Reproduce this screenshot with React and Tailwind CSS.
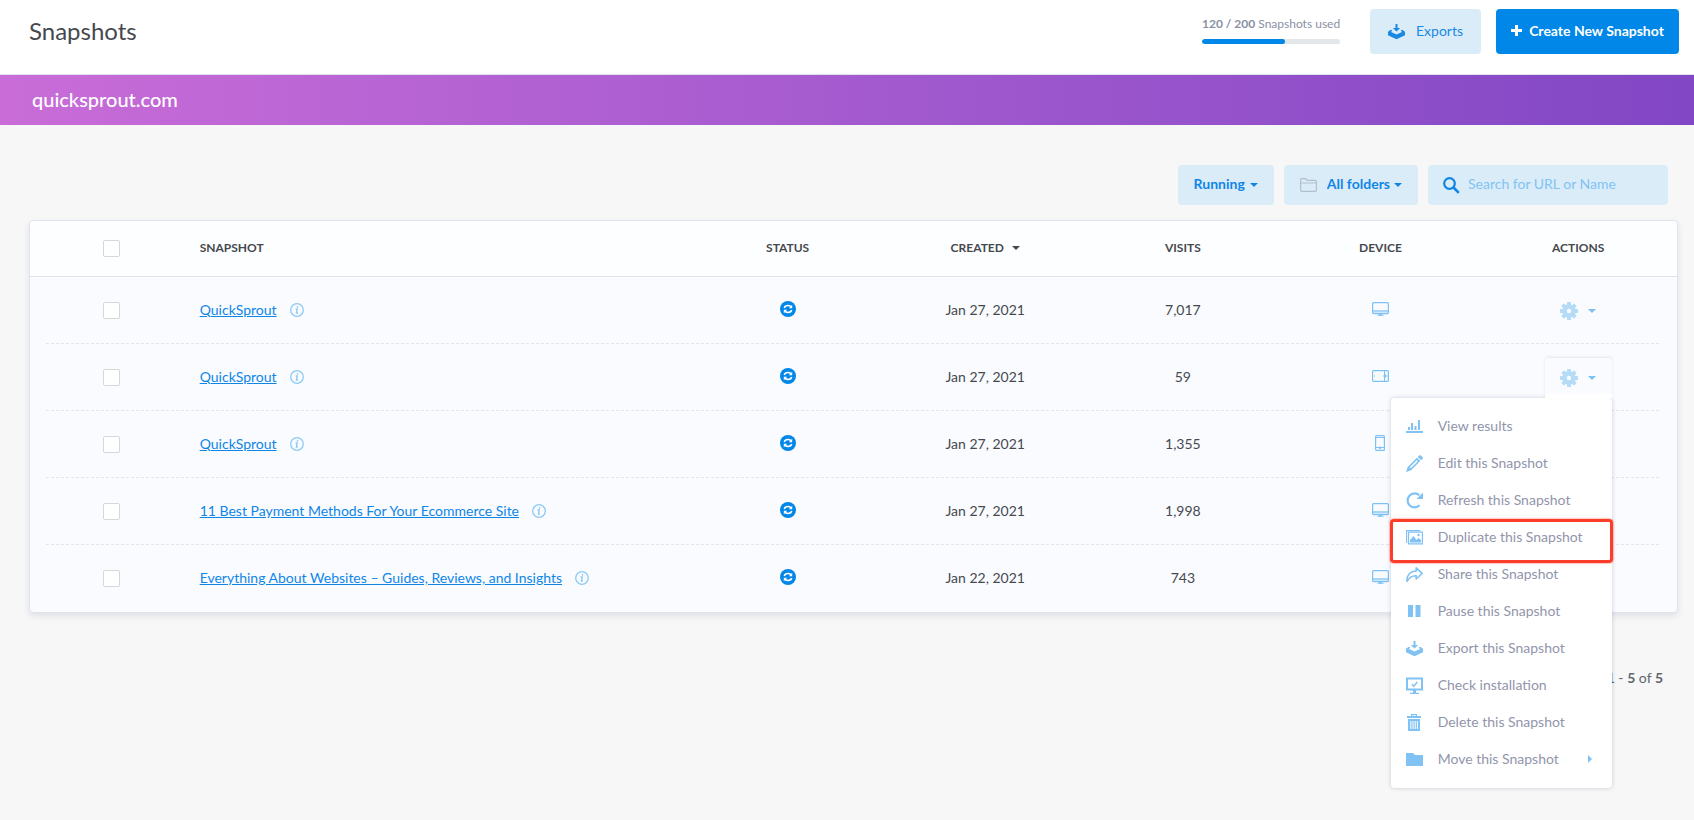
import React, { useState } from 'react';

const snapshots = [
  { id: 1, name: 'QuickSprout', created: 'Jan 27, 2021', visits: '7,017', device: 'desktop' },
  { id: 2, name: 'QuickSprout', created: 'Jan 27, 2021', visits: '59', device: 'tablet' },
  { id: 3, name: 'QuickSprout', created: 'Jan 27, 2021', visits: '1,355', device: 'mobile' },
  { id: 4, name: '11 Best Payment Methods For Your Ecommerce Site', created: 'Jan 27, 2021', visits: '1,998', device: 'desktop' },
  { id: 5, name: 'Everything About Websites – Guides, Reviews, and Insights', created: 'Jan 22, 2021', visits: '743', device: 'desktop' },
];

const Caret = ({ className }) => (
  <svg className={className} width="8" height="4" viewBox="0 0 8 4" fill="currentColor" aria-hidden="true">
    <path d="M0 0h8L4 4z" />
  </svg>
);

const ExportIcon = () => (
  <svg width="17" height="16" viewBox="0 0 17 16" fill="currentColor" aria-hidden="true">
    <path d="M7.5 0h2v4h2.700L8.500 7.500 4.800 4h2.700z" />
    <path d="M4.300 6.400 3 8l5.500 2.600L14 8l-1.300-1.600 1.500-.6L17 7.800v3.400l-8.500 4L0 11.200V7.800l2.800-2z" />
  </svg>
);

const GearIcon = () => (
  <svg width="18" height="18" viewBox="0 0 18 18" aria-hidden="true">
    <g fill="#b5dbf7">
      <path fillRule="evenodd" d="M9 2.200a6.800 6.800 0 1 0 0 13.600a6.800 6.800 0 1 0 0-13.600zM9 6.800a2.200 2.200 0 1 1 0 4.400a2.200 2.200 0 1 1 0-4.400z" />
      {[0, 45, 90, 135, 180, 225, 270, 315].map((deg) => (
        <rect key={deg} x="7" y="0" width="4" height="4" rx="0.600" transform={`rotate(${deg} 9 9)`} />
      ))}
    </g>
  </svg>
);

const InfoIcon = () => (
  <svg width="14" height="14" viewBox="0 0 14 14" fill="none" stroke="#8ccaf6" aria-hidden="true">
    <circle cx="7" cy="7" r="6.300" strokeWidth="1.300" />
    <path d="M5.600 6h1.500L6.500 10h1.400" strokeWidth="1.400" />
    <circle cx="7.500" cy="3.900" r="0.500" />
  </svg>
);

const RunningIcon = () => (
  <svg width="16" height="16" viewBox="0 0 16 16" fill="none" aria-label="Running" role="img">
    <circle cx="8" cy="8" r="8" fill="#0087e8" />
    <path d="M4.300 7c.3-1.500 1.800-2.400 3.700-2.400 1.200 0 2.200.4 2.900 1M11.700 9c-.3 1.500-1.800 2.400-3.700 2.400-1.200 0-2.200-.4-2.900-1" stroke="#fff" strokeWidth="1.500" />
    <path d="M12.200 3.800v3.500H8.800zM3.800 12.200V8.700h3.400z" fill="#fff" />
  </svg>
);

const DeviceIcon = ({ type }) => {
  if (type === 'tablet') {
    return (
      <svg width="17" height="12" viewBox="0 0 17 12" fill="none" stroke="#7cc1f3" role="img" aria-label="Tablet">
        <rect x="0.600" y="0.600" width="15.800" height="10.800" rx="1" strokeWidth="1.200" />
        <path d="M12.500 1v10" />
        <path d="M11 6h4.500M13.500 4.500v3" />
        <path d="M2.500 5v2" opacity="0.500" />
      </svg>
    );
  }
  if (type === 'mobile') {
    return (
      <svg width="10" height="16" viewBox="0 0 10 16" fill="none" stroke="#7cc1f3" role="img" aria-label="Mobile">
        <rect x="0.600" y="0.600" width="8.800" height="14.800" rx="1" strokeWidth="1.200" />
        <path d="M1 2.500h8M1 12.500h8" />
        <circle cx="5" cy="12.800" r="1" />
      </svg>
    );
  }
  return (
    <svg width="17" height="14" viewBox="0 0 17 14" fill="none" stroke="#7cc1f3" role="img" aria-label="Desktop">
      <path d="M1 8h15v2.500H1z" fill="#a9d6f7" stroke="none" />
      <rect x="0.600" y="0.600" width="15.800" height="11" rx="1" strokeWidth="1.200" />
      <path d="M5.500 13.300h6M7 12.500h3" />
    </svg>
  );
};

const menuItems = [
  {
    label: 'View results',
    icon: <path d="M0 15h17v-2H0zM2 9h2v3H2zM5 5h2v7H5zM8.500 8h2v4h-2zM12 2h2v10h-2z" />,
  },
  {
    label: 'Edit this Snapshot',
    icon: (
      <>
        <path d="M11.700 1.900 13 .600q1-.9 2 0L16.400 2q.9 1 0 2L15.100 5.300z" />
        <path fillRule="evenodd" d="m10.900 2.700 3.400 3.400-9.200 9.200L0 17l1.700-5.100zM10.700 5.200l-7 7 1.100 1.100 7-7z" />
      </>
    ),
  },
  {
    label: 'Refresh this Snapshot',
    icon: (
      <>
        <path d="M13.600 13.300A7 7 0 1 1 13.300 3.200" fill="none" stroke="currentColor" strokeWidth="2.200" />
        <path d="M17 .500v6.500h-6.500z" />
      </>
    ),
  },
  {
    label: 'Duplicate this Snapshot',
    marked: true,
    icon: (
      <>
        <path d="M.6 14V1.600h13.800" fill="none" stroke="currentColor" strokeWidth="1.200" />
        <path d="M2.600 3.200h13.800v11.700H2.600z" fill="none" stroke="currentColor" strokeWidth="1.200" />
        <path d="M4 13.500v-2.500L7.500 7l3 4 2-2 2.500 2v2.500z" />
        <circle cx="12.500" cy="6" r="1.200" />
      </>
    ),
  },
  {
    label: 'Share this Snapshot',
    icon: <path d="M10.200 1.800 16.200 7.400l-6 5.600V9.700C6 9.600 3.300 11 1 15.500.6 10 3.500 5.500 10.200 5z" fill="none" stroke="currentColor" strokeWidth="1.600" strokeLinejoin="round" />,
  },
  {
    label: 'Pause this Snapshot',
    icon: <path d="M2 2h5v12H2zM9.500 2h5v12h-5z" />,
  },
  {
    label: 'Export this Snapshot',
    icon: (
      <>
        <path d="M7.500 1h2v4h2.700L8.500 8.500 4.800 5h2.700z" />
        <path d="M4.300 7.400 3 9l5.500 2.600L14 9l-1.300-1.600 1.500-.6L17 8.800v3.400l-8.500 4L0 12.200V8.800l2.800-2z" />
      </>
    ),
  },
  {
    label: 'Check installation',
    icon: (
      <>
        <path d="M1 1.500h15v11H1z" fill="none" stroke="currentColor" strokeWidth="2" />
        <path d="M4 17h9v-1.200h-3V13H7v2.800H4z" />
        <path d="m5.800 7.200 2 2L11.300 5" fill="none" stroke="currentColor" strokeWidth="1.500" />
      </>
    ),
  },
  {
    label: 'Delete this Snapshot',
    icon: (
      <>
        <path d="M5.500 2V.600h5V2" fill="none" stroke="currentColor" strokeWidth="1.200" />
        <path d="M1 2h14v2H1z" />
        <path fillRule="evenodd" d="M2 5h12v12H2zM4.300 7v8h1V7zM6.500 7v8h1V7zM8.700 7v8h1V7zM10.900 7v8h1V7z" />
      </>
    ),
  },
  {
    label: 'Move this Snapshot',
    submenu: true,
    icon: <path d="M0 2h7l2 2h8v11H0z" />,
  },
];

const Checkbox = ({ label }) => (
  <input
    type="checkbox"
    aria-label={label}
    className="block mx-auto size-[17px] appearance-none rounded-xs border border-[#d5d7da] bg-white checked:bg-[#0087e8]"
  />
);

const ActionsMenu = () => (
  <ul role="menu" className="absolute right-0 top-full z-10 w-[221px] rounded bg-white py-[10px] text-left shadow-[0_0_4px_rgba(60,70,100,0.25)]">
    {menuItems.map((item) => (
      <li
        key={item.label}
        role="none"
        className={item.marked ? 'relative' : ''}
      >
        <button type="button" role="menuitem" className="flex h-[37px] w-full items-center gap-[15px] pl-[15px] pr-5 text-sm text-[#9295ab]">
          <svg className="shrink-0 text-[#80c2f3]" width="17" height="17" viewBox="0 0 17 17" fill="currentColor" aria-hidden="true">
            {item.icon}
          </svg>
          <span className="flex-1 text-left">{item.label}</span>
          {item.submenu && (
            <svg className="text-[#80c2f3]" width="4" height="8" viewBox="0 0 4 8" fill="currentColor" aria-hidden="true">
              <path d="M0 0v8l4-4z" />
            </svg>
          )}
        </button>
        {item.marked && (
          <span className="pointer-events-none absolute -inset-x-px top-0 -bottom-[7px] rounded border-3 border-[#fc3d2a] shadow-[0_0_2px_#fc3d2a]" />
        )}
      </li>
    ))}
  </ul>
);

const App = () => {
  const [openId, setOpenId] = useState(2);

  return (
    <div className="min-h-screen bg-[#f7f7f7] font-['Lato',sans-serif] text-[#45494e]">
      <header className="flex h-[75px] items-start justify-between border-b border-[#e0e2ee] bg-white pl-[29px] pr-[15px] pt-[9px]">
        <h1 className="text-2xl leading-[43px]">Snapshots</h1>
        <div className="flex items-start">
          <div className="mr-[30px] w-[138px] pt-[7px]">
            <p id="usage" className="mb-[7px] whitespace-nowrap text-xs leading-4 text-[#8a8fa6]">
              <b>120 / 200</b> <span>Snapshots used</span>
            </p>
            <div role="progressbar" aria-labelledby="usage" aria-valuenow={120} aria-valuemax={200} className="h-[5px] overflow-hidden rounded-full bg-[#e3e7ea]">
              <div className="h-full w-3/5 rounded-full bg-[#0087e8]" />
            </div>
          </div>
          <button type="button" className="mr-[15px] flex h-[45px] w-[111px] items-center justify-center gap-[11px] rounded bg-[#daecf8] text-sm text-[#1a89e4]">
            <ExportIcon />
            <span className="pb-0.5">Exports</span>
          </button>
          <button type="button" className="flex h-[45px] w-[183px] items-center justify-center gap-[7px] rounded bg-[#0087e8] pb-0.5 text-sm font-bold text-white">
            <svg width="11" height="11" viewBox="0 0 11 11" fill="currentColor" aria-hidden="true">
              <path d="M4 0h3v4h4v3H7v4H4V7H0V4h4z" />
            </svg>
            Create New Snapshot
          </button>
        </div>
      </header>

      <div className="flex h-[50px] items-center bg-linear-to-r from-[#c96cd8] to-[#8247c5] px-8 pb-0.5">
        <h2 className="text-xl font-medium text-white">quicksprout.com</h2>
      </div>

      <main className="pl-[29px] pr-4 pt-10">
        <div className="mb-[15px] flex justify-end gap-[10px] pr-[10px] text-sm">
          <label className="flex h-10 items-center gap-[5px] rounded-sm bg-[#daecf8] px-4 text-[#0f86e6]">
            <select aria-label="Status" className="field-sizing-content appearance-none pb-0.5 font-bold">
              <option>Running</option>
            </select>
            <Caret />
          </label>
          <label className="flex h-10 items-center rounded-sm bg-[#daecf8] px-4 text-[#0f86e6]">
            <svg className="mr-[10px]" width="17" height="14" viewBox="0 0 17 14" fill="none" stroke="#b3bfcd" aria-hidden="true">
              <path d="M.600 12V1.600q0-1 1-1h4l1.500 1.700h7.800q1.500 0 1.500 1.300V12q0 1.300-1.300 1.300H1.900Q.600 13.300.600 12zM.600 5h15.800" strokeWidth="1.200" />
            </svg>
            <select aria-label="Folder" className="mr-1 field-sizing-content appearance-none pb-0.5 font-bold">
              <option>All folders</option>
            </select>
            <Caret />
          </label>
          <label className="flex h-10 w-[240px] items-center gap-2 rounded bg-[#daecf8] px-[15px] text-[#0f86e6]">
            <svg className="shrink-0" width="17" height="17" viewBox="0 0 17 17" fill="none" stroke="currentColor" aria-hidden="true">
              <circle cx="6.500" cy="6.500" r="5.300" strokeWidth="2.200" />
              <path d="m10.500 10.500 5.300 5.300" strokeWidth="2.600" />
            </svg>
            <input type="text" aria-label="Search" placeholder="Search for URL or Name" className="w-full min-w-0 pb-0.5 outline-none placeholder:text-[#82c3f3]" />
          </label>
        </div>

        <div className="rounded border border-[#e0e4ee] bg-[#fafbff] shadow-[0_3px_6px_rgba(80,90,130,0.14)]">
          <table className="w-full table-fixed border-separate border-spacing-0 text-center text-sm">
            <colgroup>
              <col className="w-[10%]" />
              <col className="w-[30%]" />
              <col className="w-[12%]" />
              <col className="w-[12%]" />
              <col className="w-[12%]" />
              <col className="w-[12%]" />
              <col className="w-[12%]" />
            </colgroup>
            <thead className="text-xs">
              <tr className="h-[56px] *:border-b *:border-[#e0e3ec] *:bg-[#fdfeff]">
                <th className="rounded-tl pr-0.5"><Checkbox label="Select all snapshots" /></th>
                <th className="pb-0.5 pl-[5px] text-left">SNAPSHOT</th>
                <th className="pb-0.5">STATUS</th>
                <th className="pb-0.5">
                  <button type="button" className="inline-flex items-center gap-2 font-bold">
                    CREATED
                    <Caret />
                  </button>
                </th>
                <th className="pb-0.5">VISITS</th>
                <th className="pb-0.5">DEVICE</th>
                <th className="rounded-tr pb-0.5">ACTIONS</th>
              </tr>
            </thead>
            <tbody>
              {snapshots.map((row) => (
                <tr
                  key={row.id}
                  className="h-[67px] bg-[repeating-linear-gradient(to_right,#e2e5ec_0_3px,transparent_3px_5px)] bg-[length:calc(100%-32px)_1px] bg-bottom bg-no-repeat last:bg-none"
                >
                  <td className="pr-0.5"><Checkbox label={`Select ${row.name}`} /></td>
                  <td className="pb-0.5 pl-[5px]">
                    <div className="flex items-center gap-[13px]">
                      <a href="#" className="text-[#0f86e6] underline">{row.name}</a>
                      <button type="button" aria-label="Snapshot info"><InfoIcon /></button>
                    </div>
                  </td>
                  <td><div className="flex justify-center pb-1"><RunningIcon /></div></td>
                  <td className="pb-0.5">{row.created}</td>
                  <td className="pb-0.5">{row.visits}</td>
                  <td><div className="flex justify-center pb-1"><DeviceIcon type={row.device} /></div></td>
                  <td>
                    <div className="relative mx-auto w-[67px]">
                      <button
                        type="button"
                        aria-label="Snapshot actions"
                        aria-expanded={openId === row.id}
                        onClick={() => setOpenId(openId === row.id ? null : row.id)}
                        className={
                          openId === row.id
                            ? 'relative z-20 flex h-10 w-full items-center justify-center gap-[10px] rounded-t bg-[linear-gradient(#fafbff_36px,#fff_36px)] text-[#7cc1f3] shadow-[0_-1px_3px_rgba(60,70,100,0.12)]'
                            : 'flex h-10 w-full items-center justify-center gap-[10px] text-[#7cc1f3]'
                        }
                      >
                        <GearIcon />
                        <Caret />
                      </button>
                      {openId === row.id && <ActionsMenu />}
                    </div>
                  </td>
                </tr>
              ))}
            </tbody>
          </table>
        </div>

        <p className="mt-[55px] pr-[15px] text-right text-sm leading-5 text-[#62666b]">
          <b>1</b> - <b>5</b> of <b>5</b>
        </p>
      </main>
    </div>
  );
};

export default App;
